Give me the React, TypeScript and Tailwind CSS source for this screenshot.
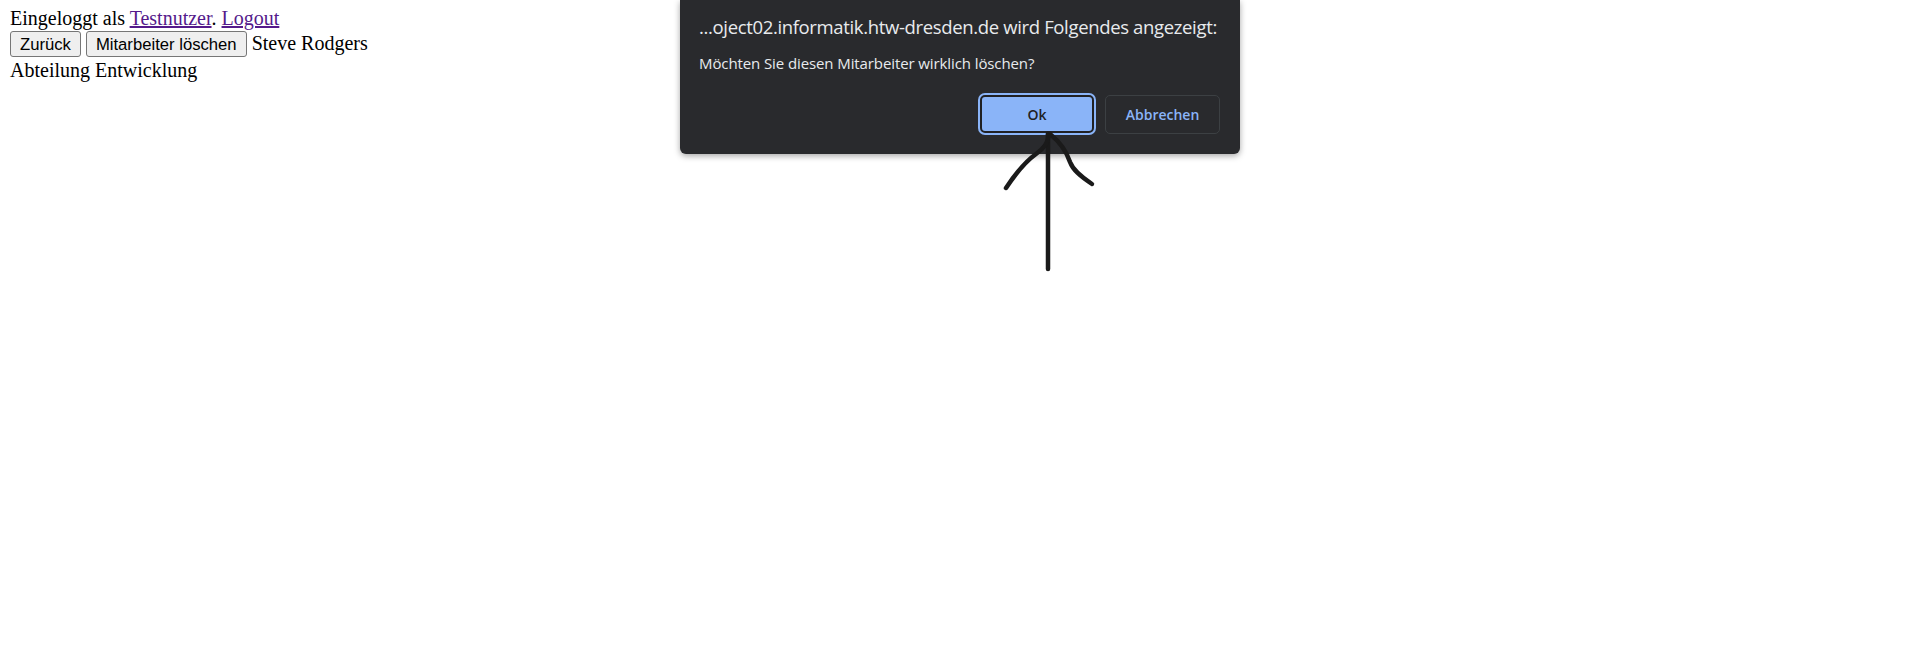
export default function App() {
  return (
    <div className="relative h-[668px] w-full overflow-hidden bg-white text-black">
      {/* page behind the alert */}
      <div className="px-[10px] pt-[7px] font-['Liberation_Serif',serif] text-[20px] leading-[23px]">
        <div>
          Eingeloggt als{" "}
          <a href="#" className="text-[#551a8b] underline">
            Testnutzer
          </a>
          .{" "}
          <a href="#" className="text-[#551a8b] underline">
            Logout
          </a>
        </div>
        <div className="flex h-[29px] items-baseline gap-[5px]">
          <button className="mt-[1px] h-[26px] rounded-[3px] border border-[#767676] bg-[#efefef] px-[9px] font-['Liberation_Sans',sans-serif] text-[16.67px] leading-normal">
            Zurück
          </button>
          <button className="mt-[1px] h-[26px] rounded-[3px] border border-[#767676] bg-[#efefef] px-[9px] font-['Liberation_Sans',sans-serif] text-[16.67px] leading-normal">
            Mitarbeiter löschen
          </button>
          <span>Steve Rodgers</span>
        </div>
        <div>Abteilung Entwicklung</div>
      </div>

      {/* browser confirm dialog */}
      <div className="absolute left-[680px] top-0 flex h-[154px] w-[560px] flex-col rounded-b-[6px] bg-[#292a2d] px-[19px] pt-[15px] font-['Open_Sans',sans-serif] shadow-[0_2px_6px_rgba(0,0,0,0.35)]">
        <div className="whitespace-nowrap text-[18.5px] leading-[24px] tracking-[-0.35px] text-[#e8eaed]">
          ...oject02.informatik.htw-dresden.de wird Folgendes angezeigt:
        </div>
        <div className="mt-[14px] whitespace-nowrap text-[15px] leading-[20px] tracking-[-0.1px] text-[#e8eaed]">
          Möchten Sie diesen Mitarbeiter wirklich löschen?
        </div>
        <div className="mt-[22px] flex justify-end gap-[11px] pr-[1px]">
          <button className="h-[38px] w-[114px] rounded-[5px] border-2 border-[#202124] bg-[#8ab4f8] text-[14px] font-semibold text-[#202124] ring-2 ring-[#8ab4f8]">
            Ok
          </button>
          <button className="h-[39px] w-[115px] rounded-[5px] border border-[#3c4043] bg-transparent text-[14px] font-semibold text-[#8ab4f8]">
            Abbrechen
          </button>
        </div>
      </div>

      {/* hand-drawn arrow pointing at Ok */}
      <svg
        className="pointer-events-none absolute left-[1000px] top-[128px]"
        width="100"
        height="145"
        viewBox="0 0 100 145"
        fill="none"
        stroke="#1a1a1a"
        strokeWidth="4.5"
        strokeLinecap="round"
        strokeLinejoin="round"
      >
        <path d="M48 6 L48 141" />
        <path d="M6 60 Q 22 36, 36 26 T 48 6" />
        <path d="M50 6 C 60 14, 66 22, 70 34 C 73 42, 80 48, 92 56" />
      </svg>
    </div>
  );
}
